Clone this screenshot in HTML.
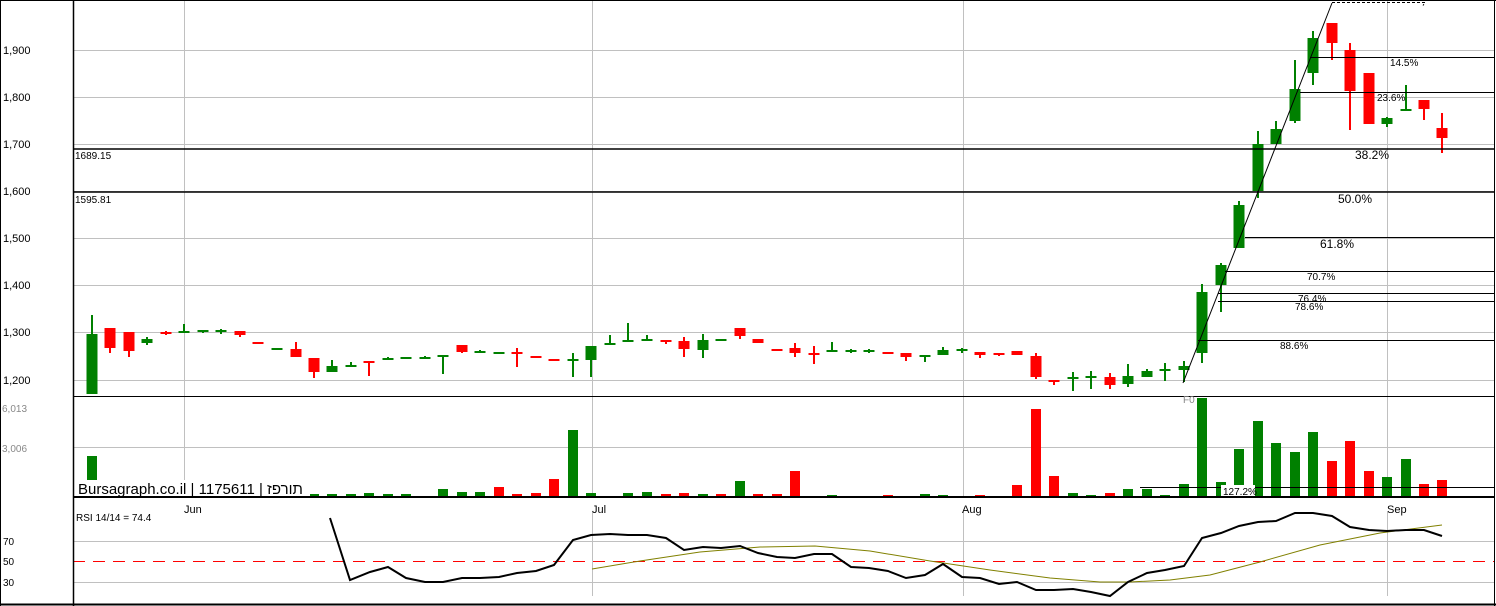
<!DOCTYPE html>
<html><head><meta charset="utf-8">
<style>
html,body{margin:0;padding:0;background:#fff;width:1496px;height:606px;overflow:hidden}
svg{display:block}
text{font-family:"Liberation Sans","Noto Sans CJK SC",sans-serif}
</style></head>
<body>
<svg id="s" width="1496" height="606" xmlns="http://www.w3.org/2000/svg">
<rect width="1496" height="606" fill="#fff"/>
<g stroke="#c0c0c0" stroke-width="1">
<line x1="73" y1="50.5" x2="1494" y2="50.5"/>
<line x1="73" y1="97.5" x2="1494" y2="97.5"/>
<line x1="73" y1="144.5" x2="1494" y2="144.5"/>
<line x1="73" y1="191.5" x2="1494" y2="191.5"/>
<line x1="73" y1="238.5" x2="1494" y2="238.5"/>
<line x1="73" y1="285.5" x2="1494" y2="285.5"/>
<line x1="73" y1="332.5" x2="1494" y2="332.5"/>
<line x1="73" y1="380.5" x2="1494" y2="380.5"/>
<line x1="73" y1="447.5" x2="1494" y2="447.5"/>
<line x1="73" y1="541.5" x2="1494" y2="541.5"/>
<line x1="73" y1="582.5" x2="1494" y2="582.5"/>
<line x1="184.5" y1="0" x2="184.5" y2="485"/>
<line x1="592.5" y1="0" x2="592.5" y2="497"/>
<line x1="963.5" y1="0" x2="963.5" y2="497"/>
<line x1="1387.5" y1="0" x2="1387.5" y2="497"/>
<line x1="592.5" y1="512" x2="592.5" y2="596"/>
<line x1="963.5" y1="512" x2="963.5" y2="596"/>
<line x1="1387.5" y1="512" x2="1387.5" y2="596"/>
</g>
<line x1="73" y1="561.5" x2="1494" y2="561.5" stroke="#ff0000" stroke-width="1" stroke-dasharray="12,8"/>
<g id="c"></g>
<g id="v"></g>
<g stroke="#000" stroke-width="1">
<line x1="1310" y1="57.5" x2="1494" y2="57.5"/>
<line x1="1300" y1="92.5" x2="1494" y2="92.5"/>
<line x1="73" y1="149" x2="1494" y2="149" stroke-width="1.6"/>
<line x1="73" y1="192" x2="1494" y2="192" stroke-width="1.6"/>
<line x1="1245" y1="237.5" x2="1494" y2="237.5"/>
<line x1="1225" y1="271.5" x2="1494" y2="271.5"/>
<line x1="1218" y1="293.5" x2="1494" y2="293.5"/>
<line x1="1218" y1="301.5" x2="1494" y2="301.5"/>
<line x1="1198" y1="340.5" x2="1494" y2="340.5"/>
<line x1="1140" y1="487.5" x2="1494" y2="487.5"/>
<line x1="1183" y1="383" x2="1332" y2="3"/>
</g>
<path d="M1332 2.5 H1425 l-2 3" stroke="#000" fill="none" stroke-dasharray="3,2"/>
<g stroke="#000" fill="none">
<line x1="73.5" y1="0" x2="73.5" y2="606" stroke-width="1.5"/>
<line x1="0" y1="0.5" x2="1496" y2="0.5"/>
<line x1="1494.5" y1="0" x2="1494.5" y2="606"/>
<line x1="73" y1="396.5" x2="1494" y2="396.5"/>
<line x1="73" y1="497" x2="1494" y2="497" stroke-width="2"/>
<line x1="0" y1="604.5" x2="1496" y2="604.5" stroke-width="2"/>
<line x1="0.5" y1="0" x2="0.5" y2="606"/>
</g>
<polyline fill="none" stroke="#808000" stroke-width="1" points="592,569 640,561 700,552 760,547 815,546 870,551 930,561 990,570 1050,578 1100,582 1130,582 1170,580 1210,575 1260,562 1320,545 1380,533 1442,525"/>
<polyline fill="none" stroke="#000" stroke-width="2" points="330,518 350,580 370,572 388,567 406,578 425,582 443,582 462,578 480,578 499,577 517,573 536,571 554,565 573,540 591,535 610,534 628,535 647,535 666,538 684,550 703,547 721,548 740,546 758,553 777,557 795,558 814,554 832,554 851,567 869,568 888,571 906,578 925,575 943,564 962,577 980,578 999,584 1017,582 1036,590 1054,590 1073,589 1091,592 1110,596 1128,582 1147,573 1165,570 1184,566 1202,538 1221,533 1239,526 1258,522 1276,521 1295,513 1313,513 1332,516 1350,527 1369,530 1387,531 1406,530 1424,530 1442,536"/>
<g font-size="11" fill="#000">
<text x="3" y="54">1,900</text><text x="3" y="101">1,800</text><text x="3" y="148">1,700</text>
<text x="3" y="195">1,600</text><text x="3" y="242">1,500</text><text x="3" y="289">1,400</text>
<text x="3" y="336">1,300</text><text x="3" y="384">1,200</text>
<text x="3" y="545" font-size="10">70</text><text x="3" y="565" font-size="10">50</text><text x="3" y="586" font-size="10">30</text>
</g>
<g font-size="10" fill="#888"><text x="2" y="412">6,013</text><text x="2" y="452">3,006</text><text x="1183" y="403">F0</text></g>
<g font-size="10" fill="#000">
<text x="75" y="159">1689.15</text><text x="75" y="203">1595.81</text>
<text x="1390" y="66">14.5%</text><text x="1377" y="101">23.6%</text>
<text x="1355" y="159" font-size="12">38.2%</text><text x="1338" y="203" font-size="12">50.0%</text>
<text x="1320" y="248" font-size="12">61.8%</text><text x="1307" y="280">70.7%</text>
<text x="1298" y="302">76.4%</text><text x="1295" y="310">78.6%</text><text x="1280" y="349">88.6%</text>
<rect x="1221" y="485" width="34" height="11" fill="#fff"/>
<text x="1223" y="495">127.2%</text>
<text x="76" y="521">RSI 14/14 = 74.4</text>
</g>
<g font-size="11" fill="#000">
<text x="184" y="513">Jun</text><text x="592" y="513">Jul</text><text x="962" y="513">Aug</text><text x="1387" y="513">Sep</text>
</g>
<rect x="76" y="480" width="234" height="16" fill="#fff"/>
<text x="78" y="494" font-size="15" fill="#000">Bursagraph.co.il | 1175611 | תורפז</text>
</svg>
<script>
var C=[
[92,'G',334,394,315,394],[110,'R',328,348,328,353],[129,'R',332,351,332,357],[147,'G',339,343,337,345],
[166,'R',332,333,331,335],[184,'G',331,333,324,333],[203,'G',330,332,330,333],[221,'G',330,332,329,334],
[240,'R',331,335,331,337],[258,'R',342,343,342,344],[277,'G',348,350,348,350],[296,'R',349,357,342,357],
[314,'R',358,372,358,378],[332,'G',366,372,360,372],[351,'G',365,366,362,366],[369,'R',361,362,361,376],
[388,'G',358,359,357,359],[406,'G',357,358,357,358],[425,'G',357,358,356,358],[443,'G',355,356,355,374],
[462,'R',345,352,345,353],[480,'G',351,352,350,353],[499,'G',352,353,352,353],[517,'R',352,353,348,367],
[536,'R',356,357,356,358],[554,'R',359,360,359,361],[573,'G',359,360,353,377],[591,'G',346,360,346,377],
[610,'G',343,344,335,344],[628,'G',340,342,323,342],[647,'G',339,340,335,340],[666,'R',340,341,340,344],
[684,'R',341,349,337,357],[703,'G',340,350,334,358],[721,'G',339,340,339,341],[740,'R',328,336,328,339],
[758,'R',339,343,339,343],[777,'R',349,350,349,351],[795,'R',348,353,343,357],[814,'R',353,355,346,364],
[832,'G',350,351,342,351],[851,'G',350,351,349,353],[869,'G',350,351,349,353],[888,'R',352,353,352,354],
[906,'R',353,357,353,361],[925,'G',355,356,355,362],[943,'G',350,355,347,355],[962,'G',349,351,348,353],
[980,'R',352,355,352,358],[999,'R',353,354,353,356],[1017,'R',351,355,351,355],[1036,'R',356,377,353,379],
[1054,'R',380,382,380,385],[1073,'G',377,378,372,391],[1091,'G',376,377,371,389],[1110,'R',377,385,373,389],
[1128,'G',376,384,364,387],[1147,'G',371,377,369,377],[1165,'G',369,370,363,381],[1184,'G',366,370,361,382],
[1202,'G',292,353,284,363],[1221,'G',265,285,263,312],[1239,'G',205,248,201,248],[1258,'G',144,191,131,198],
[1276,'G',129,144,121,144],[1295,'G',89,121,60,123],[1313,'G',38,73,31,85],[1332,'R',23,43,23,60],
[1350,'R',50,91,43,130],[1369,'R',73,124,73,124],[1387,'G',118,124,117,127],[1406,'G',109,110,85,110],
[1424,'R',100,109,100,120],[1442,'R',128,138,113,153]];
var V=[[92,'G',456],[203,'G',494],[221,'G',494],[240,'R',494],[258,'G',494],[277,'G',494],[296,'R',494],[314,'G',494],[332,'G',494],[351,'G',494],[369,'G',493],[388,'G',494],[406,'G',494],
[443,'G',489],[462,'G',492],[480,'G',492],[499,'R',487],[517,'R',494],[536,'R',493],[554,'R',479],[573,'G',430],[591,'G',493],[610,'G',496],[628,'G',493],[647,'G',492],[666,'R',494],[684,'R',493],[703,'G',494],[721,'R',494],[740,'G',481],[758,'R',494],[777,'R',494],[795,'R',471],[814,'R',496],[832,'G',495],[888,'R',495],[925,'G',494],[943,'G',495],[962,'G',496],[980,'R',495],[1017,'R',485],[1036,'R',409],[1054,'R',476],[1073,'G',493],[1091,'G',495],[1110,'R',493],[1128,'G',489],[1147,'G',489],[1165,'G',495],[1184,'G',484],[1202,'G',398],[1221,'G',482],[1239,'G',449],[1258,'G',421],[1276,'G',443],[1295,'G',452],[1313,'G',432],[1332,'R',461],[1350,'R',441],[1369,'R',471],[1387,'G',477],[1406,'G',459],[1424,'R',484],[1442,'R',480]];
var ns='http://www.w3.org/2000/svg';
function r(g,x,y,w,h,f){var e=document.createElementNS(ns,'rect');e.setAttribute('x',x);e.setAttribute('y',y);e.setAttribute('width',w);e.setAttribute('height',Math.max(h,2));e.setAttribute('fill',f);g.appendChild(e);}
var gc=document.getElementById('c'),gv=document.getElementById('v');
C.forEach(function(d){var f=d[1]=='G'?'#008000':'#ff0000';r(gc,d[0]-1,d[4],2,d[5]-d[4],f);r(gc,d[0]-5.5,d[2],11,d[3]-d[2],f);});
V.forEach(function(d){var f=d[1]=='G'?'#008000':'#ff0000';r(gv,d[0]-5,d[2],10,497-d[2],f);});
</script>
</body></html>
